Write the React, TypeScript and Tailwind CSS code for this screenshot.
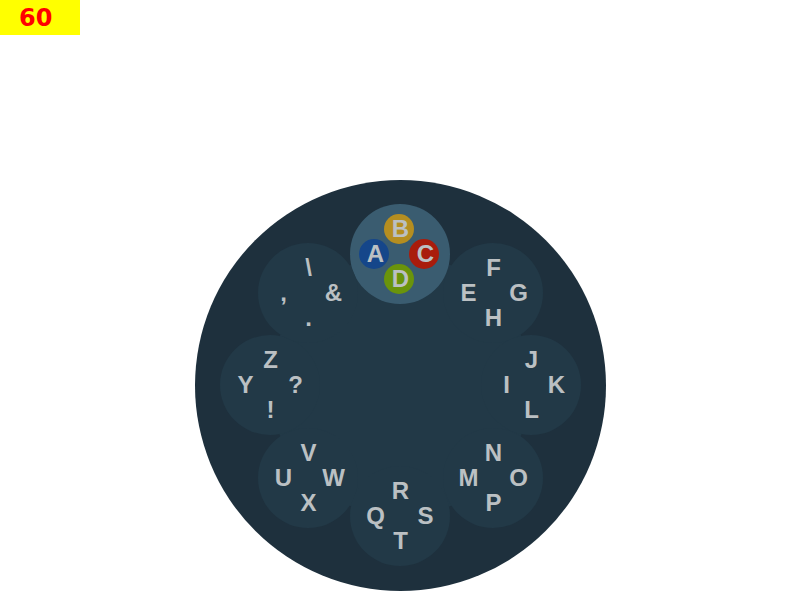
type Petal = { letters: string[]; place: string; active?: boolean };

const petals: Petal[] = [
  { letters: ["A", "B", "C", "D"], place: "left-[155px] top-[24px]", active: true },
  { letters: ["E", "F", "G", "H"], place: "left-[248px] top-[63px]" },
  { letters: ["I", "J", "K", "L"], place: "left-[286px] top-[155px]" },
  { letters: ["M", "N", "O", "P"], place: "left-[248px] top-[248px]" },
  { letters: ["Q", "R", "S", "T"], place: "left-[155px] top-[286px]" },
  { letters: ["U", "V", "W", "X"], place: "left-[63px] top-[248px]" },
  { letters: ["Y", "Z", "?", "!"], place: "left-[25px] top-[155px]" },
  { letters: [",", "\\", "&", "."], place: "left-[63px] top-[63px]" },
];

// Left, top, right, bottom, like the face buttons of a gamepad.
const slots = [
  { place: "left-[9px] top-[35px]", color: "bg-[#15468a]" },
  { place: "left-[34px] top-[10px]", color: "bg-[#b58e20]" },
  { place: "left-[59px] top-[35px]", color: "bg-[#a91c0c]" },
  { place: "left-[34px] top-[60px]", color: "bg-[#6a940b]" },
];

function PetalGroup({ letters, place, active }: Petal) {
  return (
    <div
      role="group"
      aria-label={letters.join(" ")}
      className={`absolute size-[100px] rounded-full ${place} ${active ? "bg-[#3a5c70]" : "bg-[#223947]"}`}
    >
      {letters.map((letter, i) => (
        <button
          key={letter}
          type="button"
          className={`absolute flex size-[30px] items-center justify-center rounded-full pl-[3px] text-2xl leading-[30px] font-bold text-[#bbc0c3] ${slots[i].place} ${active ? slots[i].color : ""}`}
        >
          {letter}
        </button>
      ))}
    </div>
  );
}

export default function App() {
  return (
    <div className="flex min-h-screen flex-col bg-white font-['Liberation_Sans',Arial,sans-serif]">
      <header className="flex h-[35px] w-20 items-center bg-[#ffff00] pl-[19px]">
        <output className="font-['DejaVu_Sans',sans-serif] text-2xl leading-8 font-bold text-[#ff0000]">
          60
        </output>
      </header>
      <main className="flex justify-center pt-[145px] pl-px">
        <div className="relative size-[411px] shrink-0 rounded-full bg-[#1e303d]">
          <div className="absolute inset-[75px] rounded-full bg-[#223947]" />
          {petals.map((petal) => (
            <PetalGroup key={petal.letters[0]} {...petal} />
          ))}
        </div>
      </main>
    </div>
  );
}
